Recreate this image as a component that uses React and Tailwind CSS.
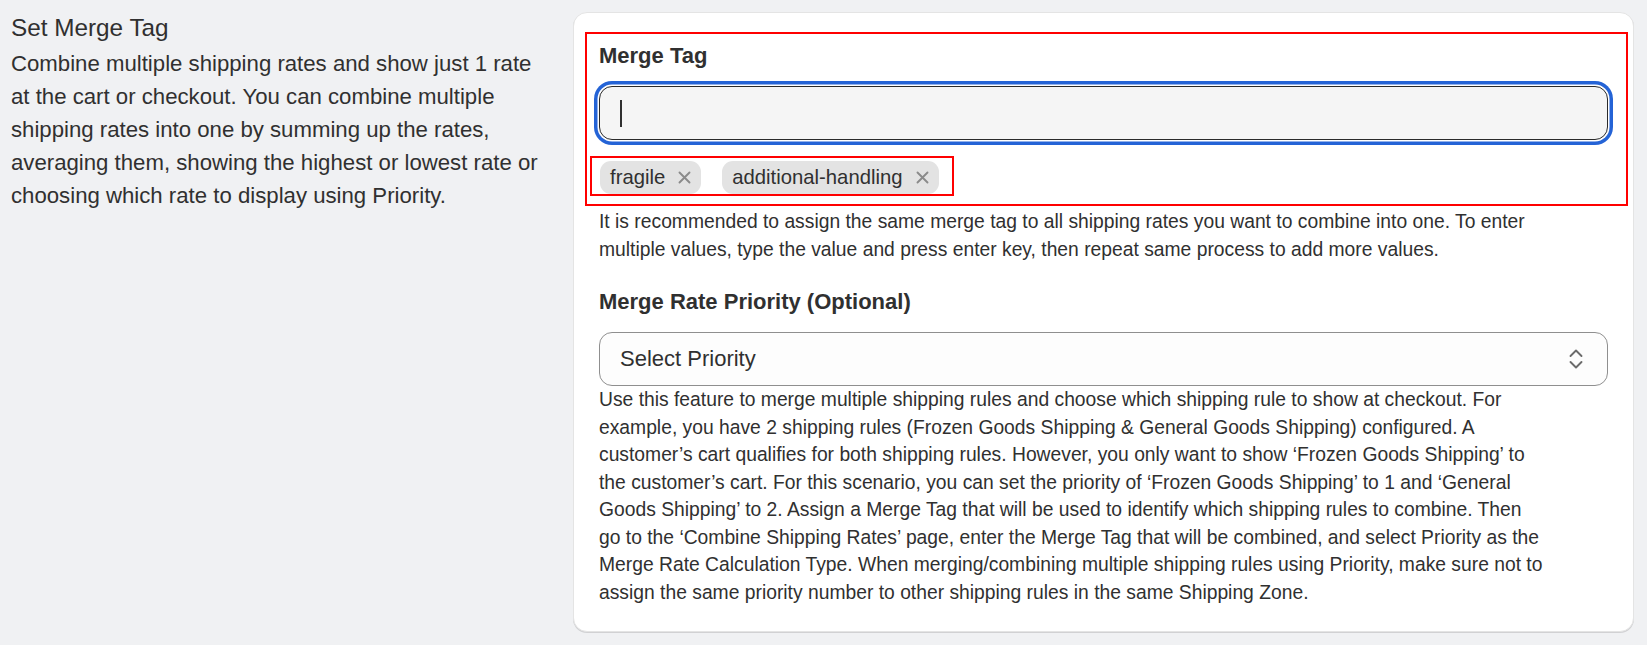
import React from "react";

function XIcon() {
  return (
    <svg width="13" height="13" viewBox="0 0 13 13" className="shrink-0">
      <path d="M1.5 1.5 L11.5 11.5 M11.5 1.5 L1.5 11.5" stroke="#8a8a8a" strokeWidth="1.9" strokeLinecap="round" />
    </svg>
  );
}

function Chip({ label }) {
  return (
    <div className="flex h-[33px] items-center gap-[13px] rounded-[11px] bg-[#e3e3e3] pl-[10px] pr-[10px] text-[20.3px] text-[#303030]">
      <span className="leading-none">{label}</span>
      <XIcon />
    </div>
  );
}

export default function App() {
  return (
    <div
      className="min-h-[645px] w-full bg-[#f0f1f3] pt-[12px] text-[#303030]"
      style={{ fontFamily: '"Liberation Sans", Arial, Helvetica, sans-serif' }}
    >
      <div className="flex items-start">
        <div className="ml-[11px] w-[540px] shrink-0 pt-[1px]">
          <h2 className="text-[24.3px] font-normal leading-[30px] text-[#303030]">Set Merge Tag</h2>
          <p className="mt-[4px] whitespace-nowrap text-[22.2px] leading-[33px] text-[#303030]">
            Combine multiple shipping rates and show just 1 rate
            <br />
            at the cart or checkout. You can combine multiple
            <br />
            shipping rates into one by summing up the rates,
            <br />
            averaging them, showing the highest or lowest rate or
            <br />
            choosing which rate to display using Priority.
          </p>
        </div>

        <div className="ml-[22px] w-[1061px] shrink-0 rounded-[14px] border border-[#e4e4e4] bg-white px-[25px] pb-[25px] pt-[19px] shadow-[0_1px_0_0_rgba(0,0,0,0.13)]">
          <div className="-ml-[14px] -mr-[20px] border-2 border-[#ff0000] pb-[8px] pl-[12px] pr-[18px] pt-[8px]">
            <div className="text-[22px] font-bold leading-[28px]">Merge Tag</div>
            <div className="mt-[16px] flex h-[54px] items-center rounded-[13px] border-[1.5px] border-[#2a2a2a] bg-[#f5f5f5] pl-[20px] shadow-[0_0_0_1.5px_#ffffff,0_0_0_5px_#2463d6]">
              <div className="h-[27px] w-[1.5px] bg-[#303030]" />
            </div>
            <div className="-ml-[9px] mt-[16px] flex w-fit items-start gap-[21px] border-2 border-[#ff0000] pl-[8px] pr-[13px] pt-[3px]">
              <Chip label="fragile" />
              <Chip label="additional-handling" />
            </div>
          </div>

          <p className="mt-[2px] whitespace-nowrap text-[19.3px] leading-[27.5px]">
            It is recommended to assign the same merge tag to all shipping rates you want to combine into one. To enter
            <br />
            multiple values, type the value and press enter key, then repeat same process to add more values.
          </p>

          <div className="mt-[25px] text-[22px] font-bold leading-[27.5px]">Merge Rate Priority (Optional)</div>

          <div className="mt-[16.5px] flex h-[54px] items-center justify-between rounded-[13px] border border-[#8f8f8f] bg-[#fdfdfd] pl-[20px] pr-[24px]">
            <span className="text-[22px] leading-none text-[#303030]">Select Priority</span>
            <svg width="14" height="22" viewBox="0 0 14 22" className="shrink-0">
              <path d="M1.5 8 L7 2.5 L12.5 8" fill="none" stroke="#6b6b6b" strokeWidth="1.9" strokeLinecap="round" strokeLinejoin="round" />
              <path d="M1.5 14 L7 19.5 L12.5 14" fill="none" stroke="#6b6b6b" strokeWidth="1.9" strokeLinecap="round" strokeLinejoin="round" />
            </svg>
          </div>

          <p className="whitespace-nowrap text-[19.3px] leading-[27.5px]">
            Use this feature to merge multiple shipping rules and choose which shipping rule to show at checkout. For
            <br />
            example, you have 2 shipping rules (Frozen Goods Shipping &amp; General Goods Shipping) configured. A
            <br />
            customer’s cart qualifies for both shipping rules. However, you only want to show ‘Frozen Goods Shipping’ to
            <br />
            the customer’s cart. For this scenario, you can set the priority of ‘Frozen Goods Shipping’ to 1 and ‘General
            <br />
            Goods Shipping’ to 2. Assign a Merge Tag that will be used to identify which shipping rules to combine. Then
            <br />
            go to the ‘Combine Shipping Rates’ page, enter the Merge Tag that will be combined, and select Priority as the
            <br />
            Merge Rate Calculation Type. When merging/combining multiple shipping rules using Priority, make sure not to
            <br />
            assign the same priority number to other shipping rules in the same Shipping Zone.
          </p>
        </div>
      </div>
    </div>
  );
}
